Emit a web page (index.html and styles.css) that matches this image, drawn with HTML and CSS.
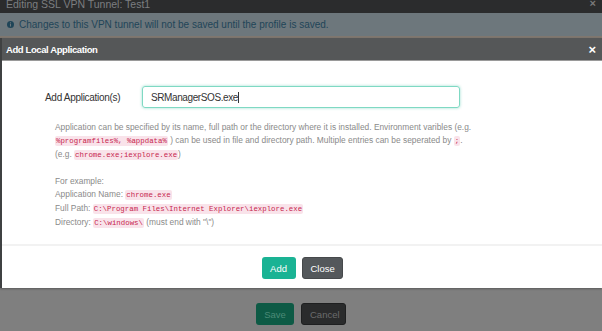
FILE: index.html
```html
<!DOCTYPE html>
<html lang="en">
<head>
    <meta charset="UTF-8">
    <meta name="viewport" content="width=device-width, initial-scale=1.0">
    <title>Add Local Application</title>
    <link rel="stylesheet" href="styles.css">
</head>
<body>
    <div class="page">
        <div class="topbar">
            <span class="topbar-title">Editing SSL VPN Tunnel: Test1</span>
            <span class="topbar-close">&times;</span>
        </div>
        <div class="info">
            <svg class="info-icon" width="7" height="7" viewBox="0 0 8 8">
                <circle cx="4" cy="4" r="4" fill="#1f4558"/>
                <rect x="3.4" y="3.3" width="1.2" height="3" fill="#6d777c"/>
                <rect x="3.4" y="1.5" width="1.2" height="1.2" fill="#6d777c"/>
            </svg>
            <span>Changes to this VPN tunnel will not be saved until the profile is saved.</span>
        </div>

        <div class="modal">
            <div class="modal-header">
                <span class="modal-title">Add Local Application</span>
                <span class="modal-close">&times;</span>
            </div>
            <div class="modal-body">
                <div class="field">
                    <label class="field-label">Add Application(s)</label>
                    <div class="field-input">SRManagerSOS.exe<span class="caret"></span></div>
                </div>
                <div class="help">
                    <p>Application can be specified by its name, full path or the directory where it is installed. Environment varibles (e.g.<br>
                    <code>%programfiles%, %appdata%</code> ) can be used in file and directory path. Multiple entries can be seperated by <code>;</code>.<br>
                    (e.g. <code>chrome.exe;iexplore.exe</code>)</p>
                    <p>For example:<br>
                    Application Name: <code>chrome.exe</code><br>
                    Full Path: <code>C:\Program Files\Internet Explorer\iexplore.exe</code><br>
                    Directory: <code>C:\windows\</code> (must end with "\")</p>
                </div>
            </div>
            <div class="modal-footer">
                <button class="btn btn-add">Add</button>
                <button class="btn btn-close">Close</button>
            </div>
        </div>

        <div class="backdrop-footer">
            <button class="btn btn-save">Save</button>
            <button class="btn btn-cancel">Cancel</button>
        </div>
    </div>
</body>
</html>
```

FILE: styles.css
```css
/* Basic styling */
body {
    font-family: "Liberation Sans", Arial, sans-serif;
    margin: 0;
    background-color: #7f7f7f;
}
.page {
    width: 602px;
    height: 331px;
    overflow: hidden;
    background-color: #7f7f7f;
}
.topbar {
    height: 13px;
    background-color: #2b2c2d;
    display: flex;
    justify-content: space-between;
    align-items: flex-end;
    padding: 0 6px 0 6px;
    overflow: hidden;
}
.topbar-title {
    color: #7c7e80;
    font-size: 10.5px;
    line-height: 10px;
    margin-bottom: 4px;
}
.topbar-close {
    color: #7a7a7a;
    font-size: 11px;
    font-weight: bold;
    line-height: 9px;
    margin-bottom: 5px;
}
.info {
    height: 23px;
    background-color: #6d777c;
    display: flex;
    align-items: center;
    gap: 5px;
    padding-left: 7px;
    color: #1f4558;
    font-size: 10px;
    border-bottom: 2px solid #7f776f;
}
.modal {
    background: white;
    border-left: 2px solid #3f4142;
    box-shadow: 0 1px 2px rgba(0, 0, 0, 0.3);
}
.modal-header {
    height: 22px;
    background-color: #555758;
    display: flex;
    justify-content: space-between;
    align-items: center;
    padding: 0 6px 0 4px;
    border-bottom: 1px solid #9a9a9a;
}
.modal-title {
    color: white;
    font-size: 9.5px;
    font-weight: bold;
    letter-spacing: -0.4px;
}
.modal-close {
    color: white;
    font-size: 13px;
    font-weight: bold;
}
.modal-body {
    padding: 25px 0 0 43px;
    height: 158px;
    border-bottom: 2px solid #f2f2f2;
}
.field {
    display: flex;
    align-items: center;
}
.field-label {
    width: 97px;
    color: #333;
    font-size: 10px;
    letter-spacing: -0.3px;
}
.field-input {
    width: 308px;
    height: 20px;
    border: 1px solid #7fd9c3;
    border-radius: 3px;
    box-shadow: 0 0 3px rgba(26, 179, 148, 0.45);
    padding-left: 8px;
    display: flex;
    align-items: center;
    color: #333;
    font-size: 10px;
    letter-spacing: -0.4px;
}
.caret {
    width: 1px;
    height: 11px;
    background-color: #333;
}
.help {
    margin: 13px 0 0 10px;
    color: #8a8a8a;
    font-size: 8.4px;
    line-height: 13px;
    white-space: nowrap;
}
.help p {
    margin: 0 0 13px;
}
code {
    font-family: "Liberation Mono", monospace;
    font-size: 7.4px;
    color: #c7254e;
    background-color: #f9e3ea;
    padding: 1px 1px;
    border-radius: 2px;
}
.modal-footer {
    height: 42px;
    display: flex;
    justify-content: center;
    align-items: flex-start;
    padding-top: 11px;
    box-sizing: border-box;
    gap: 6px;
}
.btn {
    height: 22px;
    border: none;
    border-radius: 3px;
    color: white;
    font-family: "Liberation Sans", Arial, sans-serif;
    font-size: 9.5px;
    padding: 0 8px;
}
.btn-add {
    background-color: #1ab394;
    width: 34px;
}
.btn-close {
    background-color: #54585b;
    width: 41px;
    border: 1px solid #46494b;
}
.backdrop-footer {
    height: 43px;
    display: flex;
    justify-content: center;
    align-items: flex-start;
    padding-top: 15px;
    box-sizing: border-box;
    gap: 7px;
}
.btn-save {
    background-color: #0d5a45;
    color: #4b8a77;
    width: 38px;
}
.btn-cancel {
    background-color: #2a2b2c;
    color: #6a6b6c;
    width: 45px;
    border: 1px solid #1e1f20;
}
```
